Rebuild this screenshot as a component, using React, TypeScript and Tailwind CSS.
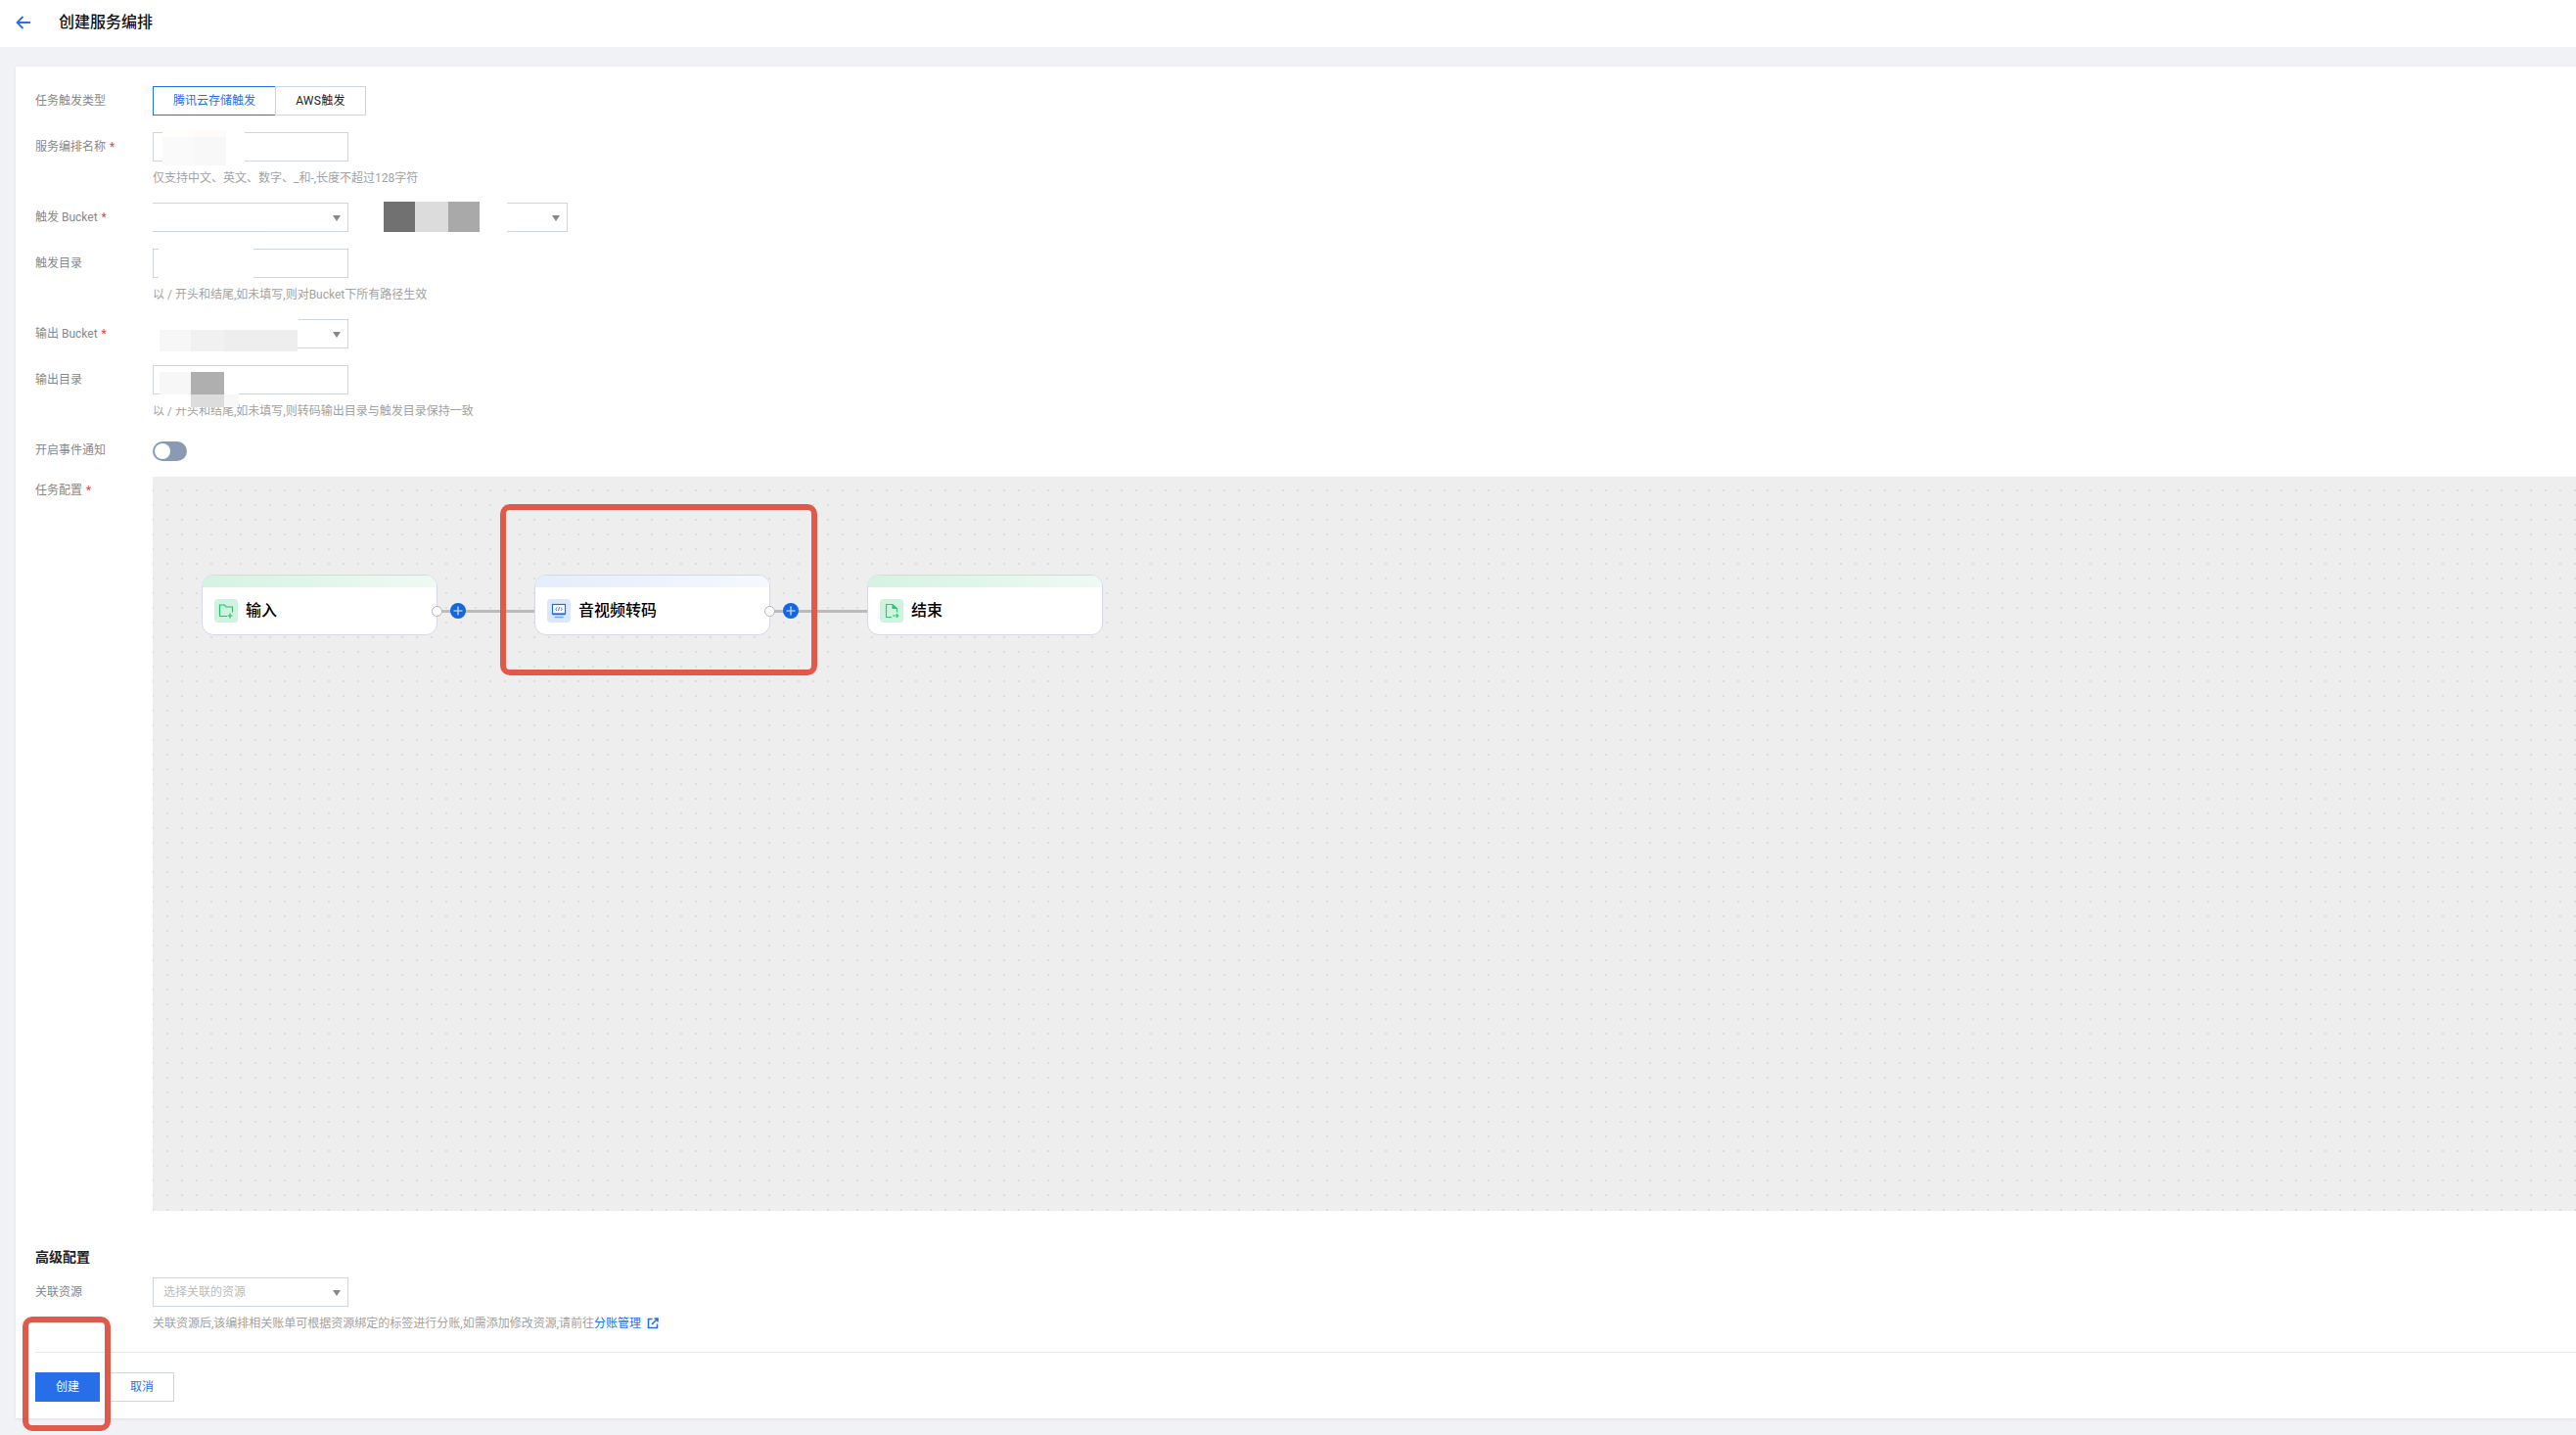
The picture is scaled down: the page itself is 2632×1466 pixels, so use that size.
import { ReactNode } from "react";

const font = { fontFamily: 'Roboto, "Noto Sans CJK SC", sans-serif' };

function Label({ text, required, h = "leading-[31px]" }: { text: string; required?: boolean; h?: string }) {
  return (
    <div className={`w-[120px] shrink-0 text-xs text-[#888] ${h}`}>
      {text}
      {required && <span className="ml-[4px] text-[#e54545]">*</span>}
    </div>
  );
}

function Hint({ children }: { children: ReactNode }) {
  return <div className="mt-2 text-xs leading-[18px] text-[#a2a2a2]">{children}</div>;
}

function Caret() {
  return <span className="absolute right-[7px] top-[12px] border-x-[4px] border-t-[6px] border-x-transparent border-t-[#888]" />;
}

function FolderIcon() {
  return (
    <svg width="16" height="16" viewBox="0 0 16 16" fill="none" stroke="#19c765" strokeWidth="1.2">
      <path d="M1.5 13.5V2h5l1.5 2h6.5v5.5M1.5 13.5H9" />
      <path d="M12 10.5v5M9.5 13h5" />
    </svg>
  );
}

function MonitorIcon() {
  return (
    <svg width="16" height="16" viewBox="0 0 16 16" fill="none" stroke="#1f6fe8" strokeWidth="1.2">
      <rect x="1.5" y="1.5" width="13" height="9.5" fill="#fff" />
      <path d="M6 4.5 4.8 6.2 6 8M10 4.5l1.2 1.7L10 8M8.6 4.3 7.4 8.2" strokeWidth="0.9" />
      <path d="M1.5 11.5h13" strokeWidth="1.6" />
      <path d="M3.5 14.5h9" strokeWidth="1.4" stroke="#7aa6ee" />
    </svg>
  );
}

function FileIcon() {
  return (
    <svg width="16" height="16" viewBox="0 0 16 16" fill="none" stroke="#2ccb77" strokeWidth="1.2">
      <path d="M8 14.5H2.5v-13h6.5l4.5 4v4" />
      <path d="M9 1.5v4h4.5" fill="#2ccb77" />
      <path d="M9 13h5.5M12.8 11.2 14.6 13l-1.8 1.8" />
    </svg>
  );
}

function LinkIcon() {
  return (
    <svg width="12" height="12" viewBox="0 0 12 12" fill="none" stroke="#266fe8" strokeWidth="1.6" className="ml-[6px]">
      <path d="M5.5 1.5h-4v9h9v-4" />
      <path d="M5 7l5.5-5.5M7.5 1h3.5v3.5" />
    </svg>
  );
}

function Node({
  left,
  title,
  icon,
  iconBg,
  head,
}: {
  left: string;
  title: string;
  icon: ReactNode;
  iconBg: string;
  head: string;
}) {
  return (
    <div className={`absolute top-[100px] h-[62px] w-[241px] overflow-hidden rounded-[12px] border border-[#d5d9e6] bg-white ${left}`}>
      <div className={`h-[12px] ${head}`} />
      <div className="flex items-center pl-[12px] pt-[12px]">
        <span className={`flex h-[24px] w-[24px] items-center justify-center rounded-[4px] ${iconBg}`}>{icon}</span>
        <span className="ml-[8px] text-base font-medium leading-[24px] text-black">{title}</span>
      </div>
    </div>
  );
}

function Port({ left }: { left: string }) {
  return <span className={`absolute top-[132px] h-[11px] w-[11px] rounded-full border border-[#a9b4c6] bg-white ${left}`} />;
}

function Plus({ left }: { left: string }) {
  return (
    <span className={`absolute top-[129px] flex h-[16px] w-[16px] items-center justify-center rounded-full bg-[#1467df] ${left}`}>
      <svg width="10" height="10" viewBox="0 0 10 10" stroke="#a9c8f7" strokeWidth="1.6">
        <path d="M5 .5v9M.5 5h9" />
      </svg>
    </span>
  );
}

export default function App() {
  return (
    <div style={font} className="relative h-[1466px] overflow-hidden bg-[#f1f2f6]">
      {/* 헤더 */}
      <div className="flex h-[48px] items-center bg-white pb-[3px] pl-[16px]">
        <svg width="16" height="14" viewBox="0 0 16 14" fill="none" stroke="#266fe8" strokeWidth="1.8">
          <path d="M15 7H2M7.5 1 1.5 7l6 6" />
        </svg>
        <span className="ml-[28px] text-base font-medium text-[#111]">创建服务编排</span>
      </div>

      {/* 본문 카드 */}
      <div className="ml-[16px] mt-[20px] h-[1381px] bg-white pl-[20px] pt-[20px] shadow-[0_1px_3px_rgba(0,0,0,0.08)]">
        <div className="flex">
          <Label text="任务触发类型" />
          <div className="flex h-[30px] text-xs">
            <div className="flex w-[126px] items-center justify-center border border-[#266fe8] text-[#266fe8]">腾讯云存储触发</div>
            <div className="ml-[-1px] flex w-[93px] items-center justify-center border border-[#cfd5de] tracking-[0.3px] text-[#222]">AWS触发</div>
          </div>
        </div>

        <div className="mt-4 flex">
          <Label text="服务编排名称" required />
          <div>
            <div className="relative h-[30px] w-[200px] border border-[#cfd5de]">
              <div className="absolute left-[9px] top-[-3px] flex h-[36px]">
                <div className="w-[32px] border-t-[7px] border-[#fffefa] bg-[#fafafa]" />
                <div className="w-[33px] border-t-[7px] border-[#fffbf8] bg-[#f8f8f8]" />
                <div className="w-[19px] bg-white" />
              </div>
            </div>
            <Hint>仅支持中文、英文、数字、_和-,长度不超过128字符</Hint>
          </div>
        </div>

        <div className="mt-4 flex">
          <Label text="触发 Bucket" required />
          <div className="relative h-[30px] w-[200px] border border-l-0 border-[#cfd5de]">
            <Caret />
          </div>
          <div className="ml-[36px] mt-[-1px] flex h-[31px]">
            <div className="w-[32px] bg-[#717171]" />
            <div className="w-[34px] bg-[#dcdcdc]" />
            <div className="w-[32px] bg-[#a9a9a9]" />
          </div>
          <div className="relative ml-[28px] h-[30px] w-[62px] border border-l-0 border-[#cfd5de]">
            <Caret />
          </div>
        </div>

        <div className="mt-4 flex">
          <Label text="触发目录" />
          <div>
            <div className="relative h-[30px] w-[200px] border border-[#cfd5de]">
              <div className="absolute left-[5px] top-[-2px] h-[34px] w-[97px] bg-white" />
            </div>
            <Hint>以 / 开头和结尾,如未填写,则对Bucket下所有路径生效</Hint>
          </div>
        </div>

        <div className="mt-4 flex">
          <Label text="输出 Bucket" required />
          <div className="relative h-[30px] w-[200px] border border-[#cfd5de]">
            <Caret />
            <div className="absolute left-[-1px] top-[-1px] h-[12px] w-[149px] bg-white" />
            <div className="absolute left-[-1px] top-[10px] h-[22px] w-[8px] bg-white" />
            <div className="absolute left-[6px] top-[10px] flex h-[22px]">
              <div className="w-[32px] bg-[#f7f7f7]" />
              <div className="w-[34px] bg-[#f1f1f1]" />
              <div className="w-[75px] bg-[#eeeeee]" />
            </div>
          </div>
        </div>

        <div className="mt-4 flex">
          <Label text="输出目录" />
          <div>
            <div className="relative h-[30px] w-[200px] border border-[#cfd5de]">
              <div className="absolute left-[6px] top-[6px] h-[36px] w-[81px] bg-white" />
              <div className="absolute left-[6px] top-[6px] h-[23px] w-[32px] bg-[#f7f7f7]" />
              <div className="absolute left-[38px] top-[6px] h-[23px] w-[34px] bg-[#afafaf]" />
              <div className="absolute left-[38px] top-[29px] h-[13px] w-[34px] bg-[#dcdcdc]" />
              <div className="absolute left-[72px] top-[29px] h-[13px] w-[15px] bg-[#f8f8f8]" />
            </div>
            <Hint>以 / 开头和结尾,如未填写,则转码输出目录与触发目录保持一致</Hint>
          </div>
        </div>

        <div className="mt-[22px] flex">
          <Label text="开启事件通知" h="leading-[19px]" />
          <div className="flex h-[20px] w-[35px] items-center rounded-full bg-[#8a9ab3] pl-[2px]">
            <span className="h-[16px] w-[16px] rounded-full bg-white" />
          </div>
        </div>

        <div className="mt-4 flex">
          <Label text="任务配置" required h="leading-[29px]" />
          {/* 캔버스 */}
          <div className="relative h-[750px] flex-1 bg-[#eeeeee] bg-[radial-gradient(circle_at_1px_1px,#a0a0a0_0.4px,transparent_0.8px)] bg-[size:15px_15px] bg-[position:-1px_13px]">
            <div className="absolute left-[291px] top-[136px] h-[3px] w-[100px] bg-[#bbbbbb]" />
            <div className="absolute left-[632px] top-[136px] h-[3px] w-[100px] bg-[#bbbbbb]" />
            <Node
              left="left-[50px]"
              title="输入"
              icon={<FolderIcon />}
              iconBg="bg-[#d0f3df]"
              head="bg-gradient-to-r from-[#d5f2e2] to-[#eefaf4]"
            />
            <Node
              left="left-[390px]"
              title="音视频转码"
              icon={<MonitorIcon />}
              iconBg="bg-[#dbe7fb]"
              head="bg-gradient-to-r from-[#e4edfb] to-[#f5f8fe]"
            />
            <Node
              left="left-[730px]"
              title="结束"
              icon={<FileIcon />}
              iconBg="bg-[#d0f3df]"
              head="bg-gradient-to-r from-[#d5f2e2] to-[#eefaf4]"
            />
            <Port left="left-[285px]" />
            <Plus left="left-[304px]" />
            <Port left="left-[625px]" />
            <Plus left="left-[644px]" />
            <div className="absolute left-[355px] top-[28px] h-[175px] w-[324px] rounded-[10px] border-[6px] border-[#e05a4b]" />
          </div>
        </div>

        <div className="mt-[37px] text-sm font-semibold leading-[20px] text-[#222]">高级配置</div>
        <div className="mt-[11px] flex">
          <Label text="关联资源" />
          <div>
            <div className="relative h-[30px] w-[200px] border border-[#cfd5de] pl-[10px] text-xs leading-[28px] text-[#bbbbbb]">
              选择关联的资源
              <Caret />
            </div>
            <div className="mt-2 flex items-center text-xs leading-[18px] text-[#a2a2a2]">
              关联资源后,该编排相关账单可根据资源绑定的标签进行分账,如需添加修改资源,请前往
              <span className="text-[#266fe8]">分账管理</span>
              <LinkIcon />
            </div>
          </div>
        </div>

        <div className="mt-5 border-t border-[#e5e7ec] pt-5">
          <div className="flex gap-[10px] text-xs">
            <div className="flex h-[30px] w-[66px] items-center justify-center bg-[#266fe8] text-white">创建</div>
            <div className="flex h-[30px] w-[66px] items-center justify-center border border-[#cfd5de] text-[#266fe8]">取消</div>
          </div>
        </div>
      </div>

      {/* 빨간 표시 */}
      <div className="absolute left-[23px] top-[1345px] h-[117px] w-[90px] rounded-[10px] border-[6px] border-[#e05a4b]" />
    </div>
  );
}
